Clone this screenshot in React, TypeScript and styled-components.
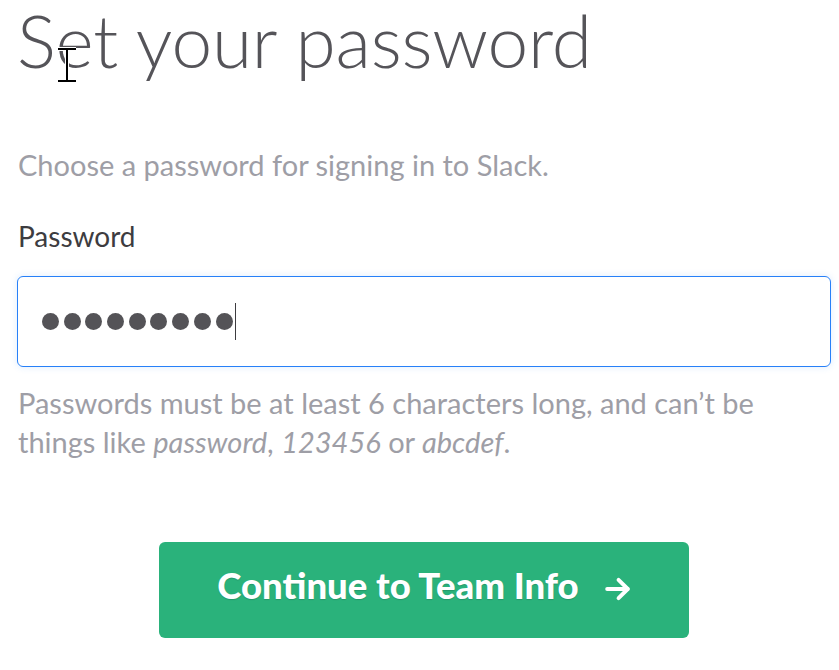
import React from "react";
import styled, { createGlobalStyle } from "styled-components";

const Global = createGlobalStyle`
  html, body { margin: 0; padding: 0; background: #ffffff; }
  body { font-family: Lato, "Noto Sans", sans-serif; -webkit-font-smoothing: antialiased; }
`;

const Page = styled.main`
  position: relative;
  width: 814px;
  padding: 0 0 0 17px;
  display: flex;
  flex-direction: column;
`;

const Title = styled.h1`
  margin: 0;
  font-size: 73px;
  line-height: 80px;
  font-weight: 300;
  color: #555459;
  letter-spacing: -0.2px;
`;

const Lead = styled.p`
  margin: 65px 0 0 1px;
  font-size: 29px;
  line-height: 40px;
  color: #9e9ea6;
`;

const Label = styled.label`
  margin: 31px 0 0 1px;
  font-size: 28px;
  line-height: 40px;
  color: #3d3c40;
`;

const Field = styled.div`
  margin-top: 20px;
  height: 91px;
  box-sizing: border-box;
  border: 1px solid #2780f8;
  border-radius: 6px;
  box-shadow: 0 0 6px 1px rgba(39, 128, 248, 0.12);
  display: flex;
  align-items: center;
  padding-left: 24px;
`;

const Dots = styled.div`
  display: flex;
  gap: 4.7px;
  align-items: center;
`;

const Dot = styled.span`
  width: 17px;
  height: 17px;
  border-radius: 50%;
  background: #545357;
`;

const Caret = styled.span`
  width: 1px;
  height: 37px;
  background: #3d3c40;
  margin-left: 2px;
`;

const Help = styled.p`
  margin: 16px 0 0 1px;
  max-width: 780px;
  font-size: 29px;
  line-height: 39px;
  color: #9e9ea6;
  em { font-style: italic; }
`;

const Button = styled.button`
  align-self: center;
  margin-top: 81px;
  width: 530px;
  height: 96px;
  border: none;
  border-radius: 6px;
  background: #2ab27b;
  color: #ffffff;
  font-family: Lato, "Noto Sans", sans-serif;
  font-weight: 900;
  font-size: 36.5px;
  text-shadow: 0 1px 1px rgba(0, 0, 0, 0.15);
  display: flex;
  align-items: center;
  justify-content: center;
  gap: 26px;
  padding: 0 0 11px 0;
  cursor: pointer;
`;

const Arrow = styled.svg`
  margin-top: 9px;
  flex: none;
`;

const Cursor = styled.svg`
  position: absolute;
  left: 55px;
  top: 46px;
`;

export default function App() {
  return (
    <>
      <Global />
      <Page>
        <Title>Set your password</Title>
        <Lead>Choose a password for signing in to Slack.</Lead>
        <Label>Password</Label>
        <Field>
          <Dots>
            {Array.from({ length: 9 }).map((_, i) => (
              <Dot key={i} />
            ))}
          </Dots>
          <Caret />
        </Field>
        <Help>
          Passwords must be at least 6 characters long, and can’t be things like <em>password</em>,{" "}
          <em>123456</em> or <em>abcdef</em>.
        </Help>
        <Button>
          <span>Continue to Team Info</span>
          <Arrow width="26" height="26" viewBox="0 0 24 24" fill="none" stroke="#ffffff" strokeWidth="3.6" strokeLinecap="round" strokeLinejoin="round">
            <path d="M2 12h19" />
            <path d="M12.5 3.5l8.5 8.5-8.5 8.5" />
          </Arrow>
        </Button>
        <Cursor width="24" height="38" viewBox="0 0 24 38">
          <path d="M3 3h18M12 3v32M3 35h18" stroke="#ffffff" strokeWidth="4" fill="none" />
          <path d="M3 3h18M12 3v32M3 35h18" stroke="#000000" strokeWidth="2" fill="none" />
        </Cursor>
      </Page>
    </>
  );
}
